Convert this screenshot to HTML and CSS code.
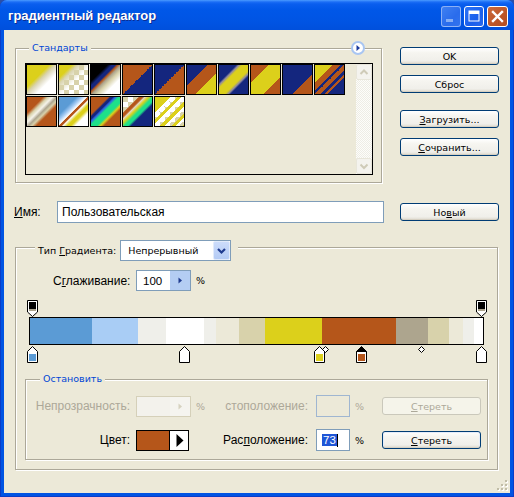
FILE: index.html
```html
<!DOCTYPE html>
<html lang="ru">
<head>
<meta charset="utf-8">
<title>градиентный редактор</title>
<link rel="stylesheet" href="styles.css">
</head>
<body>
<div class="window">
  <div class="titlebar">
    <span class="title">градиентный редактор</span>
    <div class="tbtns">
      <span class="tb tb-min"><svg width="20" height="21" viewBox="0 0 20 21"><rect x="5" y="13" width="7" height="3" fill="#86AEF4"/></svg></span>
      <span class="tb tb-max"><svg width="20" height="21" viewBox="0 0 20 21"><rect x="5" y="5" width="10" height="10" fill="none" stroke="#fff" stroke-width="1"/><rect x="5" y="5" width="10" height="3" fill="#fff"/></svg></span>
      <span class="tb tb-close"><svg width="21" height="21" viewBox="0 0 21 21"><path d="M6 6L15 15M15 6L6 15" stroke="#fff" stroke-width="2.4" stroke-linecap="square"/></svg></span>
    </div>
  </div>
  <div class="client">
    <div class="toprow">
      <div class="group std">
        <span class="legend blue sm">Стандарты</span>
        <span class="menu-btn"><svg width="14" height="14" viewBox="0 0 14 14"><circle cx="7" cy="7" r="6" fill="#fff" stroke="#A9C6F2" stroke-width="2"/><path d="M5.5 4L9 7L5.5 10Z" fill="#1B3A9C"/></svg></span>
        <div class="listbox">
          <div class="swatches">
            <div class="sw s1"></div><div class="sw s2"></div><div class="sw s3"></div><div class="sw s4"></div><div class="sw s5"></div>
            <div class="sw s6"></div><div class="sw s7"></div><div class="sw s8"></div><div class="sw s9"></div><div class="sw s10"></div>
            <div class="sw s11"></div><div class="sw s12"></div><div class="sw s13"></div><div class="sw s14"></div><div class="sw s15"></div>
          </div>
          <div class="vscroll">
            <span class="sb-btn"><svg width="14" height="14" viewBox="0 0 14 14"><path d="M3.5 9L7 5.5L10.5 9" fill="none" stroke="#CFCBB8" stroke-width="2"/></svg></span>
            <span class="sb-track"></span>
            <span class="sb-btn"><svg width="14" height="14" viewBox="0 0 14 14"><path d="M3.5 5.5L7 9L10.5 5.5" fill="none" stroke="#CFCBB8" stroke-width="2"/></svg></span>
          </div>
        </div>
      </div>
      <div class="btncol">
        <button class="btn b-ok sm">OK</button>
        <button class="btn b-reset sm">Сброс</button>
        <button class="btn b-load sm"><u>З</u>агрузить...</button>
        <button class="btn b-save sm"><u>С</u>очранить...</button>
      </div>
    </div>

    <div class="namerow">
      <label class="lbl name-lbl"><u>И</u>мя:</label>
      <div class="field name-field">Пользовательская</div>
      <button class="btn new-btn sm">Но<u>в</u>ый</button>
    </div>

    <div class="group grad">
      <div class="legend legend-type">
        <span class="sm">Тип <u>Г</u>радиента:</span>
        <div class="select">
          <span class="sm select-val">Непрерывный</span>
          <span class="select-btn"><svg width="15" height="17" viewBox="0 0 15 17"><path d="M4 7L7.5 10.5L11 7" fill="none" stroke="#1F3B8F" stroke-width="2.2"/></svg></span>
        </div>
      </div>

      <div class="smooth-row">
        <label class="lbl smooth-lbl">С<u>г</u>лаживание:</label>
        <div class="spin">
          <span class="spin-val">100</span>
          <span class="spin-btn"><svg width="19" height="19" viewBox="0 0 19 19"><path d="M7.5 6.5L11 9.5L7.5 12.5Z" fill="#1F3B8F"/></svg></span>
        </div>
        <span class="pct sm">%</span>
      </div>

      <div class="editor">
        <div class="stops stops-top">
          <svg class="stop" style="left:-2px" width="11" height="17" viewBox="0 0 11 17"><path d="M0.5 0.5H10.5V12L5.5 16.5L0.5 12Z" fill="#fff" stroke="#000"/><rect x="2" y="2" width="7" height="7" fill="#000"/><rect x="2" y="9" width="7" height="2" fill="#ADA58E"/></svg>
          <svg class="stop" style="left:447px" width="11" height="17" viewBox="0 0 11 17"><path d="M0.5 0.5H10.5V12L5.5 16.5L0.5 12Z" fill="#fff" stroke="#000"/><rect x="2" y="2" width="7" height="7" fill="#000"/><rect x="2" y="9" width="7" height="2" fill="#ADA58E"/></svg>
        </div>
        <div class="bar"></div>
        <div class="stops stops-bottom">
          <svg class="stop" style="left:-2px" width="11" height="17" viewBox="0 0 11 17"><path d="M5.5 0.5L10.5 5.5V16.5H0.5V5.5Z" fill="#fff" stroke="#000"/><rect x="2" y="8" width="7" height="7" fill="#5B9BD5"/></svg>
          <svg class="stop" style="left:150px" width="11" height="17" viewBox="0 0 11 17"><path d="M5.5 0.5L10.5 5.5V16.5H0.5V5.5Z" fill="#fff" stroke="#000"/><rect x="2" y="8" width="7" height="7" fill="#fff"/></svg>
          <svg class="stop" style="left:285px" width="11" height="17" viewBox="0 0 11 17"><path d="M5.5 0.5L10.5 5.5V16.5H0.5V5.5Z" fill="#fff" stroke="#000"/><rect x="2" y="8" width="7" height="7" fill="#DCD01B"/></svg>
          <svg class="diamond" style="left:293px" width="7" height="7" viewBox="0 0 7 7"><path d="M3.5 0.5L6.5 3.5L3.5 6.5L0.5 3.5Z" fill="#fff" stroke="#000"/></svg>
          <svg class="stop" style="left:327px" width="11" height="17" viewBox="0 0 11 17"><path d="M5.5 0.5L10.5 5.5H0.5Z" fill="#000" stroke="#000"/><path d="M0.5 5.5H10.5V16.5H0.5Z" fill="#fff" stroke="#000"/><rect x="2" y="8" width="7" height="7" fill="#B5561A"/></svg>
          <svg class="diamond" style="left:389px" width="7" height="7" viewBox="0 0 7 7"><path d="M3.5 0.5L6.5 3.5L3.5 6.5L0.5 3.5Z" fill="#fff" stroke="#000"/></svg>
          <svg class="stop" style="left:447px" width="11" height="17" viewBox="0 0 11 17"><path d="M5.5 0.5L10.5 5.5V16.5H0.5V5.5Z" fill="#fff" stroke="#000"/><rect x="2" y="8" width="7" height="7" fill="#fff"/></svg>
        </div>
      </div>

      <div class="group stopsgrp">
        <span class="legend blue sm">Остановить</span>
        <div class="stop-grid">
          <span class="lbl glbl disabled">Непрозрачность:</span>
          <div class="spin spin-dis">
            <span class="spin-val"></span>
            <span class="spin-btn"><svg width="19" height="19" viewBox="0 0 19 19"><path d="M7.5 6.5L11 9.5L7.5 12.5Z" fill="#D6D2BF"/></svg></span>
          </div>
          <span class="pct sm pct-dis">%</span>
          <span class="lbl glbl2 disabled">стоположение:</span>
          <div class="field pos-field pos-dis"></div>
          <span class="pct sm pct-dis">%</span>
          <button class="btn btn-dis sm"><u>С</u>тереть</button>

          <span class="lbl glbl">Цвет:</span>
          <div class="colorbox"><span class="color-fill"></span><span class="color-arrow"><svg width="17" height="19" viewBox="0 0 17 19"><path d="M5.5 3L12.5 9.5L5.5 16Z" fill="#000"/></svg></span></div>
          <span class="pct-empty"></span>
          <span class="lbl glbl2">Рас<u>п</u>оложение:</span>
          <div class="field pos-field"><span class="sel">73</span><span class="caret"></span></div>
          <span class="pct sm">%</span>
          <button class="btn btn-del sm"><u>С</u>тереть</button>
        </div>
      </div>
    </div>

    <span class="grip"><svg width="12" height="12" viewBox="0 0 12 12">
      <rect x="9" y="1" width="2" height="2" fill="#fff"/><rect x="8" y="0" width="2" height="2" fill="#C1BDA7"/>
      <rect x="9" y="5" width="2" height="2" fill="#fff"/><rect x="8" y="4" width="2" height="2" fill="#C1BDA7"/>
      <rect x="5" y="5" width="2" height="2" fill="#fff"/><rect x="4" y="4" width="2" height="2" fill="#C1BDA7"/>
      <rect x="9" y="9" width="2" height="2" fill="#fff"/><rect x="8" y="8" width="2" height="2" fill="#C1BDA7"/>
      <rect x="5" y="9" width="2" height="2" fill="#fff"/><rect x="4" y="8" width="2" height="2" fill="#C1BDA7"/>
      <rect x="1" y="9" width="2" height="2" fill="#fff"/><rect x="0" y="8" width="2" height="2" fill="#C1BDA7"/>
    </svg></span>
  </div>
</div>
</body>
</html>
```

FILE: styles.css
```css
* { box-sizing: border-box; }
html, body { margin: 0; padding: 0; }
body {
  width: 514px; height: 497px; overflow: hidden;
  background: #2A4FA8;
  font-family: "Liberation Sans", Arial, sans-serif;
  font-size: 12px; color: #000;
}
u { text-decoration: underline; text-underline-offset: 1px; }
.sm { font-family: "DejaVu Sans", Verdana, sans-serif; font-size: 9.5px; }
.blue { color: #0046D5; }

.window {
  width: 514px; height: 497px;
  background: #0054E3;
  border-radius: 7px 7px 0 0;
  display: flex; flex-direction: column;
  box-shadow: inset 1px 0 0 #0A3CC8, inset -1px 0 0 #0A3CC8, inset 0 -1px 0 #0A3CC8;
}
.titlebar {
  height: 30px; flex: none;
  display: flex; align-items: center;
  padding: 0 6px 0 8px;
  border-radius: 7px 7px 0 0;
  background: linear-gradient(#4A9BFF 0, #1B6DF5 2px, #0A5EEE 4px, #0057E8 10px, #0054E3 22px, #0050DC 30px);
}
.title {
  flex: 1;
  color: #fff;
  font-family: "Liberation Sans", Arial, sans-serif;
  font-weight: bold; font-size: 13px;
  letter-spacing: 0;
  text-shadow: 1px 1px 0 #0B2C91;
  margin-top: 1px;
}
.tbtns { display: flex; gap: 3px; margin-top: 2px; }
.tb {
  display: block; width: 20px; height: 21px;
  border: 1px solid #fff; border-radius: 3px;
  overflow: hidden;
}
.tb svg { display: block; margin: -1px; }
.tb-min {
  border-color: rgba(255,255,255,0.45);
  background: linear-gradient(135deg, #3F80F2, #2A6CEC 60%, #3273EE);
}
.tb-max { background: linear-gradient(135deg, #2C74F6, #1A5FEC 60%, #2A68EC); }
.tb-close { width: 21px; background: linear-gradient(135deg, #CC6A3C, #BC5628 60%, #B24E22); }

.client {
  flex: 1;
  margin: 0 4px 4px 4px;
  background: #ECE9D8;
  position: relative;
}

/* group boxes (etched) */
.group {
  position: relative;
  border: 1px solid #ACA899;
  box-shadow: inset 1px 1px 0 #fff, 1px 1px 0 #fff;
  display: flex; flex-direction: column; align-items: flex-start;
}
.legend {
  display: inline-flex; align-items: center;
  height: 14px; line-height: 14px;
  margin-top: -8px;
  padding: 0 3px;
  background: #ECE9D8;
}

/* top row */
.toprow { display: flex; align-items: flex-start; margin: 18px 0 0 11px; }
.std { width: 367px; height: 135px; }
.std .legend { margin-left: 13px; }
.menu-btn { position: absolute; left: 335px; top: -8px; width: 14px; height: 14px; }
.menu-btn svg { display: block; }

.listbox {
  margin: 8px 0 0 9px;
  width: 348px; height: 112px;
  border: 1px solid #000;
  display: flex;
  background: #ECE9D8;
}
.swatches {
  display: grid;
  grid-template-columns: repeat(10, 31px);
  grid-auto-rows: 31px;
  gap: 1px;
  align-content: start;
}
.sw { border: 1px solid #000; }
.s1 { background: linear-gradient(135deg, #DCD01B 0 38%, #D8D2AB 48%, #E8E5D3 56%, #FFFFFF 66%); }
.s2 {
  background:
    linear-gradient(135deg, #DCD01B 0 22%, rgba(216,210,171,.95) 32%, rgba(255,255,255,0) 56%),
    conic-gradient(#fff 25%, #D8D2AB 0 50%, #fff 0 75%, #D8D2AB 0) 0 0 / 10px 10px;
}
.s3 { background: linear-gradient(135deg, #000 0 28%, #14267E 36% 42%, #B5561A 46%, #ADA58E 52%, #D8D2AB 60%, #FFFFFF 74%); }
.s4 { background: linear-gradient(135deg, #B5561A 50%, #14267E 50%); }
.s5 { background: linear-gradient(135deg, #14267E 50%, #B5561A 50%); }
.s6 { background: linear-gradient(135deg, #14267E 36%, #B5561A 36% 64%, #DCD01B 64%); }
.s7 { background: linear-gradient(135deg, #14267E 30%, #8E87A0 34%, #DCD01B 40% 60%, #8E87A0 66%, #14267E 70%); }
.s8 { background: linear-gradient(135deg, #B5561A 30%, #DCD01B 30% 72%, #B5561A 72%); }
.s9 { background: linear-gradient(135deg, #14267E 66%, #B5561A 66%); }
.s10 { background: linear-gradient(135deg, #DCD01B 30%, #B5561A 30% 44%, #14267E 44% 50%, #B5561A 50% 60%, #14267E 60% 66%, #B5561A 66% 72%, #14267E 72%); }
.s11 { background: linear-gradient(135deg, #B5561A 0 28%, #D8D2AB 36%, #F5F3EA 44%, #ADA58E 52%, #D8D2AB 58%, #B5561A 66%); }
.s12 { background: linear-gradient(135deg, #5B9BD5 0 30%, #A9CDF5 40%, #FFFFFF 48%, #B5561A 50% 54%, #FFFFFF 56%, #DCD01B 64% 70%, #FFFFFF 78%); }
.s13 { background: linear-gradient(135deg, #B5561A 0 30%, #14267E 34% 38%, #2F62E6 42%, #1EE08A 48% 60%, #DCD01B 66%, #B5561A 72%); }
.s14 {
  background:
    linear-gradient(135deg, rgba(255,255,255,0) 0 26%, #B5561A 28% 34%, #E2D8C0 38%, #DCD01B 44%, #1EE08A 52% 58%, #14267E 64% 100%),
    conic-gradient(#fff 25%, #D8D2AB 0 50%, #fff 0 75%, #D8D2AB 0) 0 0 / 10px 10px;
}
.s15 {
  background:
    linear-gradient(135deg, #DCD01B 0 26%, rgba(0,0,0,0) 26%),
    repeating-linear-gradient(135deg, #DCD01B 0 3px, #fff 3px 5px, rgba(0,0,0,0) 5px 8px),
    conic-gradient(#fff 25%, #D8D2AB 0 50%, #fff 0 75%, #D8D2AB 0) 0 0 / 10px 10px;
}

.vscroll {
  margin-left: auto;
  width: 16px;
  display: flex; flex-direction: column;
  background: repeating-conic-gradient(#FDFDFA 0 25%, #EEEDE5 0 50%) 0 0 / 2px 2px;
}
.sb-btn {
  display: flex; align-items: center; justify-content: center;
  width: 16px; height: 16px;
  border: 1px solid #E8E6DA;
  border-radius: 2px;
  background: #F4F3EE;
}
.sb-btn svg { display: block; }
.sb-track { flex: 1; }

/* buttons */
.btn {
  display: flex; align-items: center; justify-content: center;
  width: 99px; height: 18px; padding: 0; margin: 0;
  border: 1px solid #003C74; border-radius: 3px;
  background: linear-gradient(#FFFFFF, #F6F5F0 30%, #F0EFEA 80%, #DCD8CC);
  color: #000;
  box-shadow: inset 0 -1px 0 #D6D0C2;
}
.btncol { display: flex; flex-direction: column; margin: -1px 0 0 18px; }
.b-reset, .b-save { margin-top: 10px; }
.b-load { margin-top: 17px; }

/* name row */
.namerow { display: flex; align-items: center; height: 22px; margin: 18px 0 0 10px; }
.name-lbl { width: 43px; }
.field {
  height: 22px;
  border: 1px solid #7F9DB9;
  background: #fff;
  display: flex; align-items: center;
}
.name-field { width: 327px; padding-left: 4px; }
.new-btn { margin-left: 16px; }

/* gradient group */
.grad { width: 483px; height: 223px; margin: 24px 0 0 11px; }
.legend-type { height: 21px; margin-left: 19px; padding: 0 7px 0 3px; }
.select {
  display: flex; align-items: center;
  width: 111px; height: 21px; margin-left: 4px;
  border: 1px solid #7F9DB9; background: #fff;
}
.select-val { flex: 1; padding-left: 7px; }
.select-btn {
  width: 17px; height: 19px;
  border: 1px solid #E2EBFB; border-radius: 2px;
  background: linear-gradient(#CCDCFB, #B4CBF5);
  display: flex; align-items: center; justify-content: center;
}
.select-btn svg { display: block; }

.smooth-row { display: flex; align-items: center; margin: 9px 0 0 37px; }
.smooth-lbl { width: 83px; }
.spin {
  display: flex; width: 55px; height: 21px;
  border: 1px solid #7F9DB9; background: #fff;
}
.spin-val { flex: 1; padding-left: 6px; display: flex; align-items: center; font-size: 11.5px; }
.spin-btn { width: 20px; background: #B4CDF3; display: flex; align-items: center; justify-content: center; }
.spin-btn svg { display: block; }
.pct { padding-left: 5px; }

.editor { margin: 9px 0 0 13px; width: 455px; }
.stops { position: relative; height: 17px; }
.stops-bottom { height: 18px; padding-top: 1px; }
.stop { position: absolute; top: 0; display: block; }
.stops-bottom .stop { top: 1px; }
.stops-bottom .diamond { position: absolute; top: 1px; display: block; }
.bar {
  height: 28px;
  border: 1px solid #000;
  background: linear-gradient(to right,
    #5B9BD5 0 62px, #A9CDF5 62px 108px, #EFEFEA 108px 136px, #FFFFFF 136px 174px,
    #EFEFEA 174px 186px, #ECE9D8 186px 209px, #D8D2AB 209px 235px, #DCD01B 235px 292px,
    #B5561A 292px 366px, #ADA58E 366px 398px, #D8D2AB 398px 419px, #ECE9D8 419px 433px,
    #EFEFEA 433px 444px, #FFFFFF 444px);
}

/* stops group */
.stopsgrp { width: 463px; height: 81px; margin: 16px 0 0 9px; }
.stopsgrp .legend { margin-left: 14px; }
.stop-grid {
  margin-top: 9px;
  display: grid;
  grid-template-columns: 110px 55px 31px 94px 34px 32px 99px;
  grid-auto-rows: 22px;
  row-gap: 12px;
  align-items: center;
}
.glbl { text-align: right; padding-right: 6px; }
.glbl2 { text-align: right; padding-right: 8px; }
.disabled { color: #ACA899; }
.pct-dis { color: #ACA899; }
.spin-dis { border-color: #D5D0B9; background: #F3F2EC; }
.spin-dis .spin-btn { background: #F5F4EF; }
.pos-field { width: 34px; }
.pos-dis { background: #ECE9D8; border-color: #9FB6D1; }
.btn-dis {
  border-color: #CAC8BB; color: #ACA899;
  background: #F5F4EA; box-shadow: none;
}
.btn-del { box-shadow: inset 0 -1px 0 #D6D0C2, inset 0 0 0 1px #E5ECF9; }
.colorbox {
  display: flex; width: 53px; height: 21px;
  border: 1px solid #000;
}
.color-fill { flex: 1; background: #B5561A; border-right: 1px solid #000; }
.color-arrow { width: 18px; background: #fff; display: flex; align-items: center; justify-content: center; }
.color-arrow svg { display: block; }
.pos-field .sel {
  margin-left: 5px;
  background: #1F56D6; color: #fff;
  font-size: 11.5px; line-height: 12px; padding: 0 1px;
}
.caret { width: 1px; height: 13px; background: #000; }

.grip { position: absolute; right: 1px; bottom: 1px; width: 12px; height: 12px; }
.grip svg { display: block; }
```
